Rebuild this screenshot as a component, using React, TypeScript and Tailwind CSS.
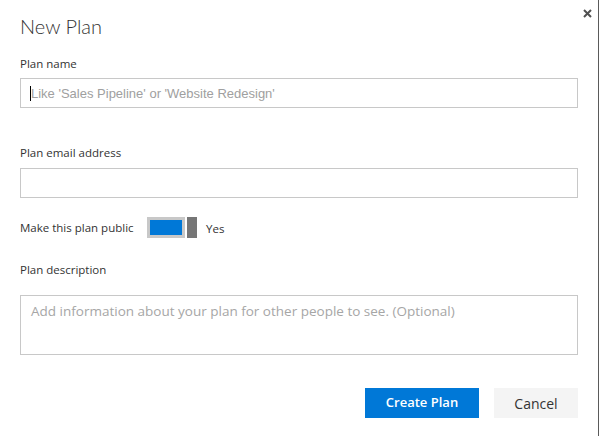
export default function App() {
  return (
    <div className="h-[436px] w-[599px] overflow-hidden border-r border-[#5a5a5a] bg-white font-['Open_Sans',sans-serif] text-[#333]">
      <div className="flex h-[55px] items-start justify-between pl-[20px] pr-[6px]">
        <h1 className="mt-[12px] font-['Lato',sans-serif] text-[20px] leading-[28px] font-light text-[#333]">
          New Plan
        </h1>
        <button className="mt-[9px]" aria-label="Close">
          <svg width="9" height="9" viewBox="0 0 9 9" className="block">
            <path d="M1 1L8 8M8 1L1 8" stroke="#505050" strokeWidth="2" />
          </svg>
        </button>
      </div>

      <div className="px-[20px]">
        <label className="block h-[18px] text-[11.5px] leading-[18px]">Plan name</label>
        <div className="relative mt-[5px]">
          <input
            className="block h-[30px] w-full border border-[#c8c8c8] pl-[10px] font-['Liberation_Sans',Arial,sans-serif] text-[13px] outline-none placeholder:text-[#a0a0a0]"
            placeholder="Like 'Sales Pipeline' or 'Website Redesign'"
          />
          <span className="absolute left-[10px] top-[8px] h-[15px] w-px bg-black" />
        </div>

        <label className="mt-[36px] block h-[18px] text-[11.5px] leading-[18px]">Plan email address</label>
        <input className="mt-[6px] block h-[30px] w-full border border-[#c8c8c8] px-[10px] text-[13px] outline-none" />

        <div className="mt-[19px] flex h-[21px] items-center text-[11.5px]">
          <span className="w-[127px]">Make this plan public</span>
          <div className="flex items-center gap-[2px]">
            <div className="h-[21px] w-[38px] border-[3px] border-[#c8c8c8] bg-[#0078d7]" />
            <div className="h-[21px] w-[10px] bg-[#767676]" />
          </div>
          <span className="ml-[9px] mt-[3px]">Yes</span>
        </div>

        <label className="mt-[23px] block h-[18px] text-[11.5px] leading-[18px]">Plan description</label>
        <textarea
          className="mt-[16px] block h-[60px] w-full resize-none border border-[#c8c8c8] pl-[10px] pt-[5px] text-[13.5px] leading-[20px] outline-none placeholder:text-[#a6a6a6]"
          placeholder="Add information about your plan for other people to see. (Optional)"
        />

        <div className="mt-[33px] flex justify-end gap-[15px]">
          <button className="h-[30px] w-[114px] bg-[#0078d7] text-[13px] font-semibold text-white">
            Create Plan
          </button>
          <button className="h-[30px] w-[84px] bg-[#f4f4f4] text-[14px] text-[#333]">Cancel</button>
        </div>
      </div>
    </div>
  );
}
